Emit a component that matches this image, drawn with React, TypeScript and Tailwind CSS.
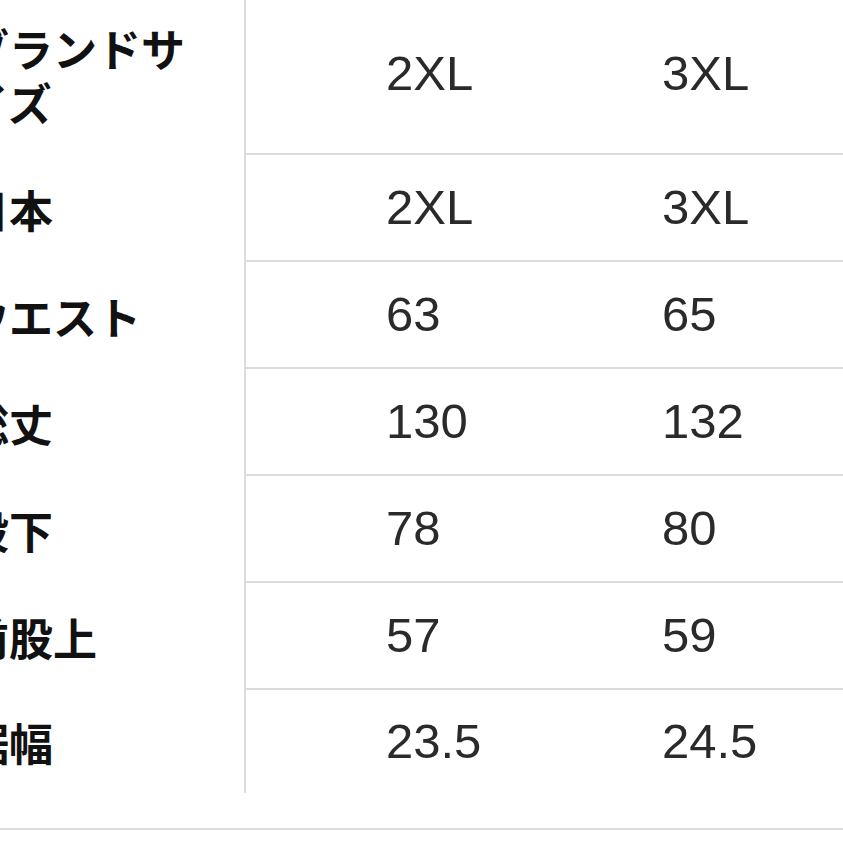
import React from "react";

const rows: { label: string; a: string; b: string }[] = [
  { label: "ブランドサイズ", a: "2XL", b: "3XL" },
  { label: "日本", a: "2XL", b: "3XL" },
  { label: "ウエスト", a: "63", b: "65" },
  { label: "総丈", a: "130", b: "132" },
  { label: "股下", a: "78", b: "80" },
  { label: "前股上", a: "57", b: "59" },
  { label: "裾幅", a: "23.5", b: "24.5" },
];

export default function App() {
  return (
    <div className="w-[843px] h-[843px] overflow-hidden bg-white">
      <div className="flex flex-col mt-[-6px] ml-[-35px] w-[1200px]">
        {rows.map((r, i) => {
          const first = i === 0;
          const last = i === rows.length - 1;
          const h = first ? "h-[161px]" : last ? "h-[103px]" : "h-[107px]";
          return (
            <div key={r.label} className={`flex ${h}`}>
              <div className="w-[281px] shrink-0 flex items-center border-r-2 border-[#dcdcdc]">
                <div
                  className="w-[240px] text-[44px] leading-[54px] font-bold text-[#111]"
                  style={{ fontFamily: '"Noto Sans CJK JP", "Noto Sans", sans-serif' }}
                >
                  {r.label}
                </div>
              </div>
              <div
                className={`flex flex-1 ${last ? "" : "border-b-2 border-[#dcdcdc]"}`}
                style={{ fontFamily: '"Liberation Sans", Arial, sans-serif' }}
              >
                <div className="w-[276px] shrink-0 pl-[140px] flex items-center text-[49px] text-[#2a2a2a]">
                  {r.a}
                </div>
                <div className="w-[276px] shrink-0 pl-[140px] flex items-center text-[49px] text-[#2a2a2a]">
                  {r.b}
                </div>
                <div className="flex-1" />
              </div>
            </div>
          );
        })}
      </div>
      <div className="mt-[35px] h-[2px] w-full bg-[#dcdcdc]" />
    </div>
  );
}
